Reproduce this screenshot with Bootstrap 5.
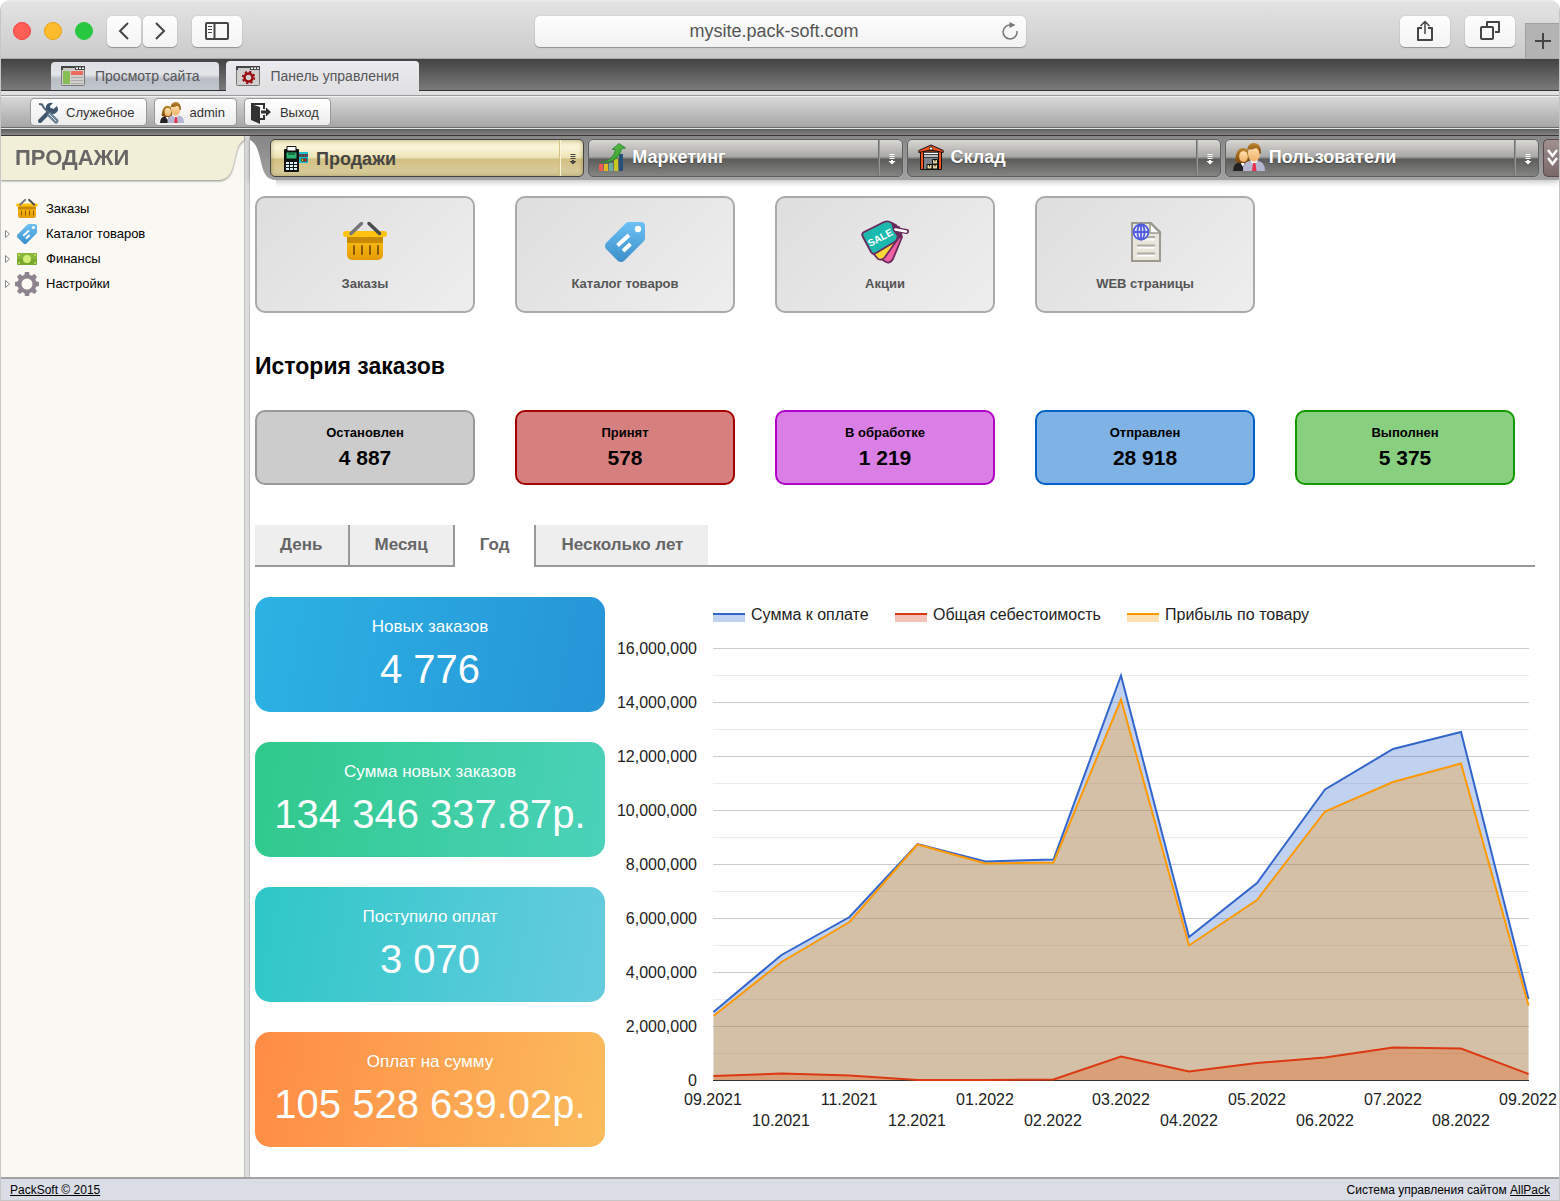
<!DOCTYPE html>
<html lang="ru">
<head>
<meta charset="utf-8">
<meta name="viewport" content="width=device-width, initial-scale=1">
<title>Панель управления</title>
<link href="https://cdn.jsdelivr.net/npm/bootstrap@5.3.0/dist/css/bootstrap.min.css" rel="stylesheet">
<style>
body{font-family:"Liberation Sans",Arial,sans-serif;font-size:13px;line-height:20px;color:#000;background:#fff}
svg{display:block;flex-shrink:0}
button,a{font-family:inherit}
.frame{border:1px solid #c6c6c6;border-width:0 1px 1px;border-radius:10px 10px 0 0;overflow:hidden}
/* browser bar */
.chrome{display:grid;grid-template-columns:1fr 491px 1fr;height:59px;background:linear-gradient(#ececec,#e2e2e2 3px,#cbcbcb);border-bottom:1px solid #a8a8a8}
.cgroup{padding-top:4px}
.dots{gap:13px;margin:0 14px 0 12px}
.dot{width:18px;height:18px;border-radius:50%;border:1px solid}
.dot-r{background:#ff5f57;border-color:#fb3b3f}.dot-y{background:#fdbc2e;border-color:#e9a30c}.dot-g{background:#27c840;border-color:#27c840}
.arrows{gap:2px;margin-right:15px}
.actions{gap:15px;padding-top:4px;margin-right:10px}
.cbtn{height:31px;padding:0;border:0;border-radius:5px;background:linear-gradient(#fdfdfd,#f4f4f4);box-shadow:0 1px 1px rgba(0,0,0,.28),0 0 1px rgba(0,0,0,.3);display:flex;align-items:center;justify-content:center;color:#444}
.cb-s{width:34px}.cb-l{width:50px}
.url{height:31px;border-radius:5px;background:linear-gradient(#fdfdfd,#f2f2f2);box-shadow:0 1px 1px rgba(0,0,0,.28),0 0 1px rgba(0,0,0,.3)}
.url input{border:0;background:none;font-size:18px;line-height:24px;color:#555;text-align:center;min-width:0;outline:0;padding:0 0 1px 14px}
.url button{border:0;background:none;padding:0 6px 0 0}
.plus{width:34px;height:35px;background:#b3b3b3;border:0;border-left:1px solid #a0a0a0;border-top:1px solid #a0a0a0;padding:0;display:flex;align-items:center;justify-content:center}
/* site tabs */
.sitebar{height:32px;background:linear-gradient(#434343,#7a7a7a);border-bottom:1px solid #333;padding-left:50px;gap:7px}
.stab{height:28px;padding:0 20px 0 10px;gap:10px;border-radius:4px 4px 0 0;font-size:14px;color:#555;text-decoration:none;background:linear-gradient(#dcdfe5,#e2e4e8 45%,#b9bdc5 60%,#c3c7ce)}
.stab.on{height:30px;margin-bottom:-1px;background:linear-gradient(#ececf0,#e0e0e3)}
.strip{height:5px;background:#e0e0e2;border-bottom:1px solid #999}
.tools{height:32px;background:linear-gradient(#d8d8d8,#a6a6a6);border-top:1px solid #f2f2f2;padding-left:29px;gap:7px;border-bottom:1px solid #6c6c6c}
.tbtn{height:28px;padding:1px 11px 0 5px;gap:6px;border:1px solid #999;border-radius:4px;background:linear-gradient(#fff,#ececec);color:#333;font-size:13px}
.darkline{height:8px;background:linear-gradient(#5c5c5c,#888);border-top:1px solid #e4e4e4;border-bottom:1px solid #43383d}
/* side */
.side{width:243px;background:#f9f8f2}
.side-h{filter:drop-shadow(0 1px 1px rgba(0,0,0,.45));height:44px}
.side-h h1{font-size:22px;line-height:44px;font-weight:700;color:#666;background:#f2efd9;padding-left:14px;margin:0}
.tree{padding:16px 0 0 3px}
.tree a{color:#000;text-decoration:none;height:25px}
.tw{width:8px;margin-right:3px}
.tree a svg.ic{margin-right:7px}
.split{width:6px;background:#dcdcdc;border:1px solid #c2c2c2;border-width:0 1px}
/* sections */
.navrow{position:relative;height:44px;padding:3px 0 0 20px;gap:4px;background:linear-gradient(#868686,#a2a2a2);box-shadow:0 2px 6px rgba(0,0,0,.25)}
.curve{position:absolute;left:0;top:0}
.sec{flex:1 1 0;min-width:0;height:38px;border:1px solid #5e5e5e;border-radius:5px;background:linear-gradient(#d9d7d3,#a8a8a6 46%,#5c5c5a 54%,#858583);box-shadow:0 0 1px #ccc}
.sec a{gap:4px;padding-left:7px;color:#fff;font-size:18px;font-weight:700;text-decoration:none;min-width:0;text-shadow:0 1px 1px rgba(0,0,0,.3);border-right:1px solid #6f6f6f;height:36px;padding-bottom:2px}
.sec button{width:23px;padding:2px 0 0 6px;border:0;border-left:1px solid #999;background:none;color:#fff}
.sec.on{border-color:#444;background:linear-gradient(#f2ebc4,#faf5d8 20%,#ece3b6 48%,#d3c083 54%,#d8cfa0);box-shadow:inset 0 0 4px rgba(110,90,30,.5)}
.sec.on a{color:#444;text-shadow:none;padding:2px 0 0 9px;border-color:#d3c083}
.sec.on button{color:#444;border-color:#fbf5dc}
.more{width:16px;height:38px;padding:0;border:1px solid #5a4a4a;border-right:0;border-radius:5px 0 0 5px;background:linear-gradient(#a08f8f,#7b6868)}
/* content */
.content{padding:16px 0 30px 5px}
.tiles{gap:40px}
.tile{width:220px;border:2px solid #aaa;border-radius:10px;background:linear-gradient(135deg,#dedede,#eee);padding:20px 0 19px;color:#555;font-weight:700;line-height:16px;gap:10px;text-decoration:none}
.content h2{font-size:23px;line-height:27px;font-weight:700;margin:40px 0 30px}
.stat{width:220px;border:2px solid #999;border-radius:10px;background:#ccc;padding:11px 0 10px;text-align:center;font-weight:700;color:#000;text-decoration:none}
.stat b{display:block;font-size:21px;line-height:30px}
.s-red{background:#d67f7f;border-color:#a50000}.s-pur{background:#d97fe5;border-color:#b000c8}.s-blu{background:#7fb2e5;border-color:#0062c8}.s-grn{background:#88cf80;border-color:#119a00}
.period{margin:40px 24px 30px 0}
.period button{height:42px;padding:0 25px;border:0 solid #999;border-bottom-width:2px;background:#eee;color:#666;font-size:17px;font-weight:700}
.period .edge-r{border-right-width:2px}
.period .edge-l{border-left-width:2px}
.period button.on{background:none;border-bottom-color:transparent}
.period .rest{border-bottom:2px solid #999}
.kpis{width:350px;gap:30px}
.kpi{border-radius:15px;padding:18px 0 13px;color:#fff;text-align:center;font-size:17px;line-height:24px}
.kpi b{display:block;font-weight:400;font-size:40px;line-height:60px;white-space:nowrap}
.k1{background:linear-gradient(100deg,#2cb2e3,#2695d8)}.k2{background:linear-gradient(100deg,#2fc98b,#4bd2ba)}.k3{background:linear-gradient(100deg,#2ec7c7,#66cce0)}.k4{background:linear-gradient(100deg,#ff8b45,#fbbc5d)}
.plot{min-width:0}
.plot text{font-family:"Liberation Sans",Arial,sans-serif;font-size:16px;fill:#222}
.foot{height:23px;background:#dbdde6;border-top:2px solid #a3a3a3;padding:1px 9px 0;font-size:12px;line-height:20px}
.foot a{color:#000;text-decoration:underline}
</style>
<script src="https://cdn.jsdelivr.net/npm/bootstrap@5.3.0/dist/js/bootstrap.bundle.min.js"></script>
</head>
<body>
<svg width="0" height="0" class="position-absolute" aria-hidden="true">
<defs>
<linearGradient id="gBasket" x1="0" y1="0" x2="0" y2="1"><stop offset="0" stop-color="#ffc810"/><stop offset="1" stop-color="#e59a0a"/></linearGradient>
<linearGradient id="gTag" x1="0" y1="0" x2="0" y2="1"><stop offset="0" stop-color="#6cc2f4"/><stop offset="1" stop-color="#3a8fca"/></linearGradient>
<linearGradient id="gUp" x1="0" y1="0" x2="1" y2="1"><stop offset="0" stop-color="#6ccf4a"/><stop offset="1" stop-color="#2a9330"/></linearGradient>
<linearGradient id="gHair" x1="0" y1="0" x2="0" y2="1"><stop offset="0" stop-color="#c08830"/><stop offset="1" stop-color="#7a4508"/></linearGradient>
<linearGradient id="gSkin" x1="0" y1="0" x2="0" y2="1"><stop offset="0" stop-color="#ffe2b0"/><stop offset="1" stop-color="#f0b068"/></linearGradient>
</defs>
<symbol id="basket" viewBox="0 0 48 48">
<rect x="6" y="16" width="36" height="26" rx="5" fill="url(#gBasket)"/><rect x="6" y="18" width="36" height="7" fill="#c88a04"/><rect x="2" y="13" width="44" height="6" rx="3" fill="#ffc20e"/>
<path d="M13 28v8M21 28v8M29 28v8M37 28v8" stroke="#8a5a00" stroke-width="2" stroke-linecap="round"/>
<path d="M10 15.500L20.500 5.500" stroke="#77777b" stroke-width="3.500" stroke-linecap="round"/><path d="M28 5.500L38.500 15.500" stroke="#4a4a4e" stroke-width="3.500" stroke-linecap="round"/></symbol>
<symbol id="tag" viewBox="0 0 48 48"><path d="M28 4h12q4 0 4 4v12q0 2-1.500 3.500L23 43q-3 2-6 0L5 31q-2-3 0-6L25 5q1.500-1 3-1z" fill="url(#gTag)"/><circle cx="37" cy="11" r="3.200" fill="#fff"/><path d="M16.500 27.500L28 17M22 33l7.500-7" stroke="#fff" stroke-width="4"/></symbol>
<symbol id="doc" viewBox="0 0 48 48"><path d="M11 5h19l9 9v29H11z" fill="#e8e5da" stroke="#9c9a90" stroke-width="2"/><path d="M29 5v10h10z" fill="#fff" stroke="#9c9a90" stroke-width="1.500"/><path d="M24 21.500h10M16 29.500h18M16 37.500h18" stroke="#fff" stroke-width="2"/><path d="M24 19h10M16 27.500h18M16 35.500h18" stroke="#aeaca4" stroke-width="2"/><g fill="none" stroke="#4f5be0" stroke-width="1.800"><circle cx="20" cy="14" r="7.500" fill="#e6e6f4"/><ellipse cx="20" cy="14" rx="3.500" ry="7.500"/><path d="M12.500 14h15M20 6.500v15"/></g></symbol>
<symbol id="money" viewBox="0 0 24 24"><rect x="2" y="6" width="20" height="12" rx="1" fill="#78a830"/><rect x="2" y="6" width="20" height="6" rx="1" fill="#88b83a"/><circle cx="12" cy="12" r="4" fill="#d3ee78"/><path d="M4 8h.1M20 8h.1M4 16h.1M20 16h.1" stroke="#c5e468" stroke-width="1.800" stroke-linecap="round"/></symbol>
<symbol id="gear" viewBox="0 0 24 24"><path fill-rule="evenodd" d="M10 0h4l.7 3 2 .8L19.300 2 22 4.700l-1.700 2.700.8 1.900 2.900.7v4l-2.900.7-.8 2 1.700 2.600L19.300 22l-2.600-1.700-2 .8L14 24h-4l-.7-2.900-2-.8L4.700 22 2 19.300l1.700-2.600-.8-2L0 14v-4l2.900-.7.8-1.900L2 4.700 4.700 2l2.600 1.800 2-.8zM12 6.500a5.500 5.500 0 100 11 5.500 5.500 0 000-11z" fill="#8d8490"/></symbol>
<symbol id="pos" viewBox="0 0 26 26"><path d="M15 6h10v11H15z" fill="#1ac0cc"/><path d="M15 8h10v3H15z" fill="#5b4a50"/><circle cx="19.500" cy="14" r="1.500" fill="#ffb020" stroke="#111" stroke-width=".7"/><circle cx="22.500" cy="14" r="1.500" fill="#f04040" stroke="#111" stroke-width=".7"/><path d="M1 4q0-1 1-1h13q1 0 1 1v21q0 1-1 1H2q-1 0-1-1z" fill="#111"/><path d="M4 .5h9V5H4z" fill="#fff" stroke="#111"/><path d="M3.500 6.500h10v6h-10z" fill="#2bb673"/><path d="M5 8h7" stroke="#075030" stroke-width="1.200"/><g fill="#d8f4fa"><path d="M3 16h3v2H3zM7 16h3v2H7zM11 16h3v2h-3zM3 19h3v2H3zM7 19h3v2H7zM11 19h3v2h-3zM3 22h3v2H3zM7 22h3v2H7zM11 22h3v2h-3z"/></g></symbol>
<symbol id="growth" viewBox="0 0 28 28"><path d="M1 21h4v7H1z" fill="#f05a50"/><path d="M6 21h4v7H6z" fill="#e6b820"/><path d="M11 20h4v8h-4z" fill="#6aae9e"/><path d="M16 16h4v12h-4z" fill="#c4c820"/><path d="M21 11h4v17h-4z" fill="#25507a"/><path d="M3 19.500Q16 17 17.500 6.500H14L21 .5l6.500 4.500-4 .8Q21 20 3 19.500z" fill="url(#gUp)" stroke="#2a8030" stroke-width=".8"/></symbol>
<symbol id="store" viewBox="0 0 26 26"><path d="M2.500 7v18.500h21V7z" fill="#f8531e" stroke="#111"/><path d="M13 1L.8 6.500V8.500L13 6l12.200 2.500V6.500z" fill="#f8531e" stroke="#111" stroke-linejoin="round"/><circle cx="13" cy="4.500" r="1.600" fill="#fff" stroke="#111" stroke-width=".8"/><path d="M5.500 8.500h15v17h-15z" fill="#7c828a" stroke="#111"/><path d="M6 9.500h14M6 12h14" stroke="#fff" stroke-width="1.500"/><path d="M6 10.700h14M6 13.300h14" stroke="#111" stroke-width=".8"/><path d="M14.500 15.500h5v4.500h-5zM9 20.500h5V25H9zM14.500 20.500h5V25h-5z" fill="#e8d8a0" stroke="#111"/><path d="M17 15.500v2M11.500 20.500v2M17 20.500v2" stroke="#111"/></symbol>
<symbol id="users" viewBox="0 0 32 28"><path d="M0 28q0-8 7-9h6v9z" fill="#222"/><path d="M7 19l3 5 2-5z" fill="#fff"/><path d="M2 18Q3 5 10 5q7 0 6 13l-4 2H6z" fill="url(#gHair)"/><ellipse cx="10.500" cy="13.500" rx="4.300" ry="5.500" fill="url(#gSkin)"/><path d="M10 28q-1-9 7-10h8q7 1 7 10z" fill="#b4b6d2"/><path d="M17 17l4 6 4-6z" fill="#fff"/><path d="M20 20h2.500l1 8h-4.500z" fill="#e8304a"/><ellipse cx="21" cy="10.500" rx="6" ry="8" fill="url(#gSkin)"/><path d="M14 9Q14 0 21 0t7 10l-1.500 1Q26 6 23 5q-4 2-8 1.500z" fill="url(#gHair)"/></symbol>
<symbol id="wrench" viewBox="0 0 24 24"><path d="M4 20L15 9" stroke="#3e566e" stroke-width="4" stroke-linecap="round"/><path d="M21 5l-3.500 3-3-.5L14 5l3-3q-5-1-7 3-1 3 1 6l3 2q4 1 7-2 2-2 0-6z" fill="#3e566e"/><path d="M3 3l3 .5 2 3.500 5 5" stroke="#4e657a" stroke-width="2" fill="none"/><path d="M14 14l6 6" stroke="#6a8296" stroke-width="5" stroke-linecap="round"/><path d="M13 13l7 7" stroke="#dfe6ec" stroke-width="1"/></symbol>
<symbol id="exit" viewBox="0 0 24 24"><path d="M1 3l9 3v17l-9-4z" fill="#333"/><path d="M1 3h13v5M14 14v4h-5" fill="none" stroke="#333" stroke-width="2"/><path d="M11 9.500h5v-3l5 4.500-5 4.500v-3h-5z" fill="#333"/></symbol>
<symbol id="win" viewBox="0 0 24 20"><rect x=".5" y=".5" width="23" height="19" rx="1" fill="#d2d0ce" stroke="#777"/><path d="M0 0h24v4H0z" fill="#444"/><path d="M2 2h12v2H2z" fill="#c8c8c8"/><path d="M15 1.500h2v1.500h-2zM18 1.500h2v1.500h-2zM21 1.500h2v1.500h-2z" fill="#fff"/></symbol>
<symbol id="down" viewBox="0 0 8 11"><path d="M1.500 .5h5M1.500 2.500h5M1.500 4.500h5" stroke="currentColor"/><path d="M3 6h2v1h2.500L4 10.500.5 7H3z" fill="currentColor"/></symbol>
<symbol id="twist" viewBox="0 0 8 10"><path d="M1.500 1.500v7l4-3.500z" fill="#fff" stroke="#888"/></symbol>
</svg>

<div class="frame min-vh-100 d-flex flex-column">
<header class="chrome">
  <div class="cgroup d-flex align-items-center">
    <div class="dots d-flex"><span class="dot dot-r"></span><span class="dot dot-y"></span><span class="dot dot-g"></span></div>
    <div class="arrows d-flex">
      <button class="cbtn cb-s" aria-label="Назад"><svg width="12" height="18" viewBox="0 0 12 18" fill="none" stroke="#444" stroke-width="2"><path d="M10 1L2 9l8 8"/></svg></button>
      <button class="cbtn cb-s" aria-label="Вперёд"><svg width="12" height="18" viewBox="0 0 12 18" fill="none" stroke="#444" stroke-width="2"><path d="M2 1l8 8-8 8"/></svg></button>
    </div>
    <button class="cbtn cb-l" aria-label="Боковая панель"><svg width="24" height="18" viewBox="0 0 24 18" fill="none" stroke="#444"><rect x="1" y="1" width="22" height="16" rx="1" stroke-width="2"/><path d="M9.500 1v16" stroke-width="2"/><path d="M3 4.500h4M3 7.500h4M3 10.500h4"/></svg></button>
  </div>
  <div class="cgroup d-flex align-items-center"><div class="url d-flex align-items-center w-100">
    <input class="flex-grow-1" type="text" value="mysite.pack-soft.com" aria-label="Адрес">
    <button aria-label="Обновить"><svg width="20" height="20" viewBox="0 0 20 20"><path d="M11 4a7 7 0 106 6" fill="none" stroke="#777" stroke-width="1.500"/><path d="M9.500 1l6 3-6 3z" fill="#777"/></svg></button>
  </div></div>
  <div class="d-flex justify-content-end align-items-center">
    <div class="actions d-flex">
      <button class="cbtn cb-l" aria-label="Поделиться"><svg width="18" height="22" viewBox="0 0 18 22" fill="none" stroke="#444" stroke-width="2"><path d="M6 8H2v12h14V8h-4" stroke-linejoin="round"/><path d="M9 14V2M4.500 6L9 1.500 13.500 6" stroke-width="1.500"/></svg></button>
      <button class="cbtn cb-l" aria-label="Вкладки"><svg width="20" height="20" viewBox="0 0 20 20" fill="none" stroke="#444" stroke-width="2" stroke-linejoin="round"><rect x="1" y="6" width="12" height="12" rx="1"/><path d="M7 5V1h12v10h-4"/></svg></button>
    </div>
    <button class="plus align-self-end" aria-label="Новая вкладка"><svg width="16" height="16" viewBox="0 0 16 16" stroke="#444" stroke-width="2"><path d="M8 0v16M0 8h16"/></svg></button>
  </div>
</header>

<nav class="sitebar d-flex align-items-end" aria-label="Сайт">
  <a class="stab d-flex align-items-center" href="#"><svg width="24" height="20" viewBox="0 0 24 20"><use href="#win"/><path d="M2 5h7v13H2z" fill="#86bd55"/><path d="M10 5h12v4H10z" fill="#ee6a5c"/><path d="M10 11.500h12M10 14.500h12M10 17.500h12" stroke="#aaa"/></svg>Просмотр сайта</a>
  <a class="stab on d-flex align-items-center" href="#"><svg width="24" height="20" viewBox="0 0 24 20"><use href="#win"/><circle cx="12.500" cy="11.500" r="4" fill="none" stroke="#990d10" stroke-width="2.500"/><circle cx="12.500" cy="11.500" r="5.800" fill="none" stroke="#990d10" stroke-width="1.800" stroke-dasharray="2.280 2.280"/></svg>Панель управления</a>
</nav>
<div class="strip"></div>
<div class="tools d-flex align-items-center">
  <button class="tbtn d-flex align-items-center"><svg width="24" height="24"><use href="#wrench"/></svg>Служебное</button>
  <button class="tbtn d-flex align-items-center"><svg width="24" height="21"><use href="#users"/></svg>admin</button>
  <button class="tbtn d-flex align-items-center"><svg width="24" height="24"><use href="#exit"/></svg>Выход</button>
</div>
<div class="darkline"></div>

<div class="d-flex flex-grow-1">
  <aside class="side flex-shrink-0">
    <div class="side-h d-flex"><h1 class="flex-grow-1">ПРОДАЖИ</h1><svg width="28" height="44" viewBox="0 0 28 44"><path d="M0 0h28v4c-7 4-8 14-10 22S14 44 2 44H0z" fill="#f2efd9"/></svg></div>
    <nav class="tree" aria-label="Продажи">
      <a class="d-flex align-items-center" href="#"><span class="tw"></span><svg class="ic" width="24" height="24"><use href="#basket"/></svg>Заказы</a>
      <a class="d-flex align-items-center" href="#"><svg class="tw" height="10"><use href="#twist"/></svg><svg class="ic" width="24" height="24"><use href="#tag"/></svg>Каталог товаров</a>
      <a class="d-flex align-items-center" href="#"><svg class="tw" height="10"><use href="#twist"/></svg><svg class="ic" width="24" height="24"><use href="#money"/></svg>Финансы</a>
      <a class="d-flex align-items-center" href="#"><svg class="tw" height="10"><use href="#twist"/></svg><svg class="ic" width="24" height="24"><use href="#gear"/></svg>Настройки</a>
    </nav>
  </aside>
  <div class="split flex-shrink-0"></div>
  <main class="flex-grow-1">
    <nav class="navrow d-flex" aria-label="Разделы">
      <svg class="curve" width="26" height="52" viewBox="0 0 26 52"><path d="M0 4c7 3 9 14 11 22s4 18 15 18v8H0z" fill="#fff"/></svg>
      <div class="sec on d-flex"><a class="flex-grow-1 d-flex align-items-center" href="#"><svg width="32" height="26"><use href="#pos"/></svg>Продажи</a><button aria-label="Меню: Продажи"><svg width="12" height="11"><use href="#down"/></svg></button></div>
      <div class="sec d-flex"><a class="flex-grow-1 d-flex align-items-center" href="#"><svg width="32" height="28"><use href="#growth"/></svg>Маркетинг</a><button aria-label="Меню: Маркетинг"><svg width="12" height="11"><use href="#down"/></svg></button></div>
      <div class="sec d-flex"><a class="flex-grow-1 d-flex align-items-center" href="#"><svg width="32" height="26"><use href="#store"/></svg>Склад</a><button aria-label="Меню: Склад"><svg width="12" height="11"><use href="#down"/></svg></button></div>
      <div class="sec d-flex"><a class="flex-grow-1 d-flex align-items-center" href="#"><svg width="32" height="28"><use href="#users"/></svg>Пользователи</a><button aria-label="Меню: Пользователи"><svg width="12" height="11"><use href="#down"/></svg></button></div>
      <button class="more" aria-label="Ещё"><svg width="15" height="18" viewBox="0 0 15 18" fill="none" stroke="#fff" stroke-width="2.500"><path d="M4 1l4.500 6L13 1M4 9l4.500 6L13 9"/></svg></button>
    </nav>

    <div class="content">
      <div class="tiles d-flex flex-wrap">
        <a class="tile d-flex flex-column align-items-center" href="#"><svg width="48" height="48"><use href="#basket"/></svg>Заказы</a>
        <a class="tile d-flex flex-column align-items-center" href="#"><svg width="48" height="48"><use href="#tag"/></svg>Каталог товаров</a>
        <a class="tile d-flex flex-column align-items-center" href="#"><svg width="48" height="48" viewBox="0 0 48 48"><g stroke="#6b2a5e" stroke-width="1.800" stroke-linejoin="round"><path d="M38 9l3 10-9 22q-3 5-7 3l-8-5z" fill="#f060a4"/><path d="M36 9l3 9-15 21q-3 4-7 2l-6-7z" fill="#fbd93a"/><path d="M2 19q-2-3 1-5L23 4q4-1.500 8 1l6 5q2 2 1 5L36 21q-.5 2-2.500 3L15 35q-3 2-5-1z" fill="#1cb9ae"/></g><path d="M30 4l5 2 5 5 1 9-4 0-5-8z" fill="#6b2a5e"/><path d="M34.500 11.500l11 2" stroke="#6b2a5e" stroke-width="5" stroke-linecap="round"/><path d="M34.500 11.500l10.500 2" stroke="#fff" stroke-width="2.600" stroke-linecap="round"/><text x="9" y="29" transform="rotate(-28 9 29)" font-family="Liberation Sans" font-size="10" font-weight="700" fill="#fff">SALE</text></svg>Акции</a>
        <a class="tile d-flex flex-column align-items-center" href="#"><svg width="48" height="48"><use href="#doc"/></svg>WEB страницы</a>
      </div>
      <h2>История заказов</h2>
      <div class="tiles d-flex flex-wrap">
        <a class="stat" href="#">Остановлен<b>4 887</b></a>
        <a class="stat s-red" href="#">Принят<b>578</b></a>
        <a class="stat s-pur" href="#">В обработке<b>1 219</b></a>
        <a class="stat s-blu" href="#">Отправлен<b>28 918</b></a>
        <a class="stat s-grn" href="#">Выполнен<b>5 375</b></a>
      </div>
      <div class="period d-flex"><button class="edge-r">День</button><button class="edge-r">Месяц</button><button class="on">Год</button><button class="edge-l">Несколько лет</button><div class="rest flex-grow-1"></div></div>
      <div class="d-flex align-items-start">
        <div class="kpis d-flex flex-column flex-shrink-0">
          <div class="kpi k1">Новых заказов<b>4 776</b></div>
          <div class="kpi k2">Сумма новых заказов<b>134 346 337.87р.</b></div>
          <div class="kpi k3">Поступило оплат<b>3 070</b></div>
          <div class="kpi k4">Оплат на сумму<b>105 528 639.02р.</b></div>
        </div>
        <div class="plot flex-grow-1">
          <svg width="100%" viewBox="605 597 954 550" role="img" aria-label="График заказов за год">
            <g stroke="#ebebeb"><path d="M713 675.500h816M713 729.500h816M713 783.500h816M713 837.500h816M713 891.500h816M713 945.500h816M713 999.500h816M713 1053.500h816"/></g>
            <g stroke="#ccc"><path d="M713 648.500h816M713 702.500h816M713 756.500h816M713 810.500h816M713 864.500h816M713 918.500h816M713 972.500h816M713 1026.500h816"/></g>
            <path fill="#36c" fill-opacity=".3" d="M713.500 1080V1012L781.500 955 849.500 917 917.500 844 985.500 861.500 1053.500 859.500 1121 675.500 1189 937 1257 883 1325 789.500 1393 749 1461 732 1528.500 999V1080z"/>
            <path fill="#dc3912" fill-opacity=".3" d="M713.500 1080V1076L781.500 1073.500 849.500 1075.500 917.500 1080H985.500L1053.500 1079.500 1121 1056.500 1189 1071.500 1257 1063 1325 1057.500 1393 1047.500 1461 1048.500 1528.500 1074V1080z"/>
            <path fill="#f90" fill-opacity=".3" d="M713.500 1080V1016L781.500 962 849.500 922 917.500 844.500 985.500 863.500 1053.500 862.500 1121 699.500 1189 945.500 1257 900 1325 811.500 1393 782 1461 763.500 1528.500 1005.500V1080z"/>
            <path d="M713 1080.500h816" stroke="#333"/>
            <g fill="none" stroke-width="2">
            <path stroke="#36c" d="M713.500 1012L781.500 955 849.500 917 917.500 844 985.500 861.500 1053.500 859.500 1121 675.500 1189 937 1257 883 1325 789.500 1393 749 1461 732 1528.500 999"/>
            <path stroke="#dc3912" d="M713.500 1076L781.500 1073.500 849.500 1075.500 917.500 1080H985.500L1053.500 1079.500 1121 1056.500 1189 1071.500 1257 1063 1325 1057.500 1393 1047.500 1461 1048.500 1528.500 1074"/>
            <path stroke="#f90" d="M713.500 1016L781.500 962 849.500 922 917.500 844.500 985.500 863.500 1053.500 862.500 1121 699.500 1189 945.500 1257 900 1325 811.500 1393 782 1461 763.500 1528.500 1005.500"/>
            </g>
            <path d="M713 613h32v9h-32z" fill="#36c" fill-opacity=".3"/><path d="M713 614h32" stroke="#36c" stroke-width="2"/>
            <path d="M895 613h32v9h-32z" fill="#dc3912" fill-opacity=".3"/><path d="M895 614h32" stroke="#dc3912" stroke-width="2"/>
            <path d="M1127 613h32v9h-32z" fill="#f90" fill-opacity=".3"/><path d="M1127 614h32" stroke="#f90" stroke-width="2"/>
            <text x="751" y="620">Сумма к оплате</text><text x="933" y="620">Общая себестоимость</text><text x="1165" y="620">Прибыль по товару</text>
            <g text-anchor="end"><text x="697" y="654">16,000,000</text><text x="697" y="708">14,000,000</text><text x="697" y="762">12,000,000</text><text x="697" y="816">10,000,000</text><text x="697" y="870">8,000,000</text><text x="697" y="924">6,000,000</text><text x="697" y="978">4,000,000</text><text x="697" y="1032">2,000,000</text><text x="697" y="1086">0</text></g>
            <g text-anchor="middle"><text x="713" y="1105">09.2021</text><text x="781" y="1126">10.2021</text><text x="849" y="1105">11.2021</text><text x="917" y="1126">12.2021</text><text x="985" y="1105">01.2022</text><text x="1053" y="1126">02.2022</text><text x="1121" y="1105">03.2022</text><text x="1189" y="1126">04.2022</text><text x="1257" y="1105">05.2022</text><text x="1325" y="1126">06.2022</text><text x="1393" y="1105">07.2022</text><text x="1461" y="1126">08.2022</text><text x="1528" y="1105">09.2022</text></g>
          </svg>
        </div>
      </div>
    </div>
  </main>
</div>
<footer class="foot d-flex justify-content-between"><a href="#">PackSoft © 2015</a><span>Система управления сайтом <a href="#">AllPack</a></span></footer>
</div>
</body>
</html>
